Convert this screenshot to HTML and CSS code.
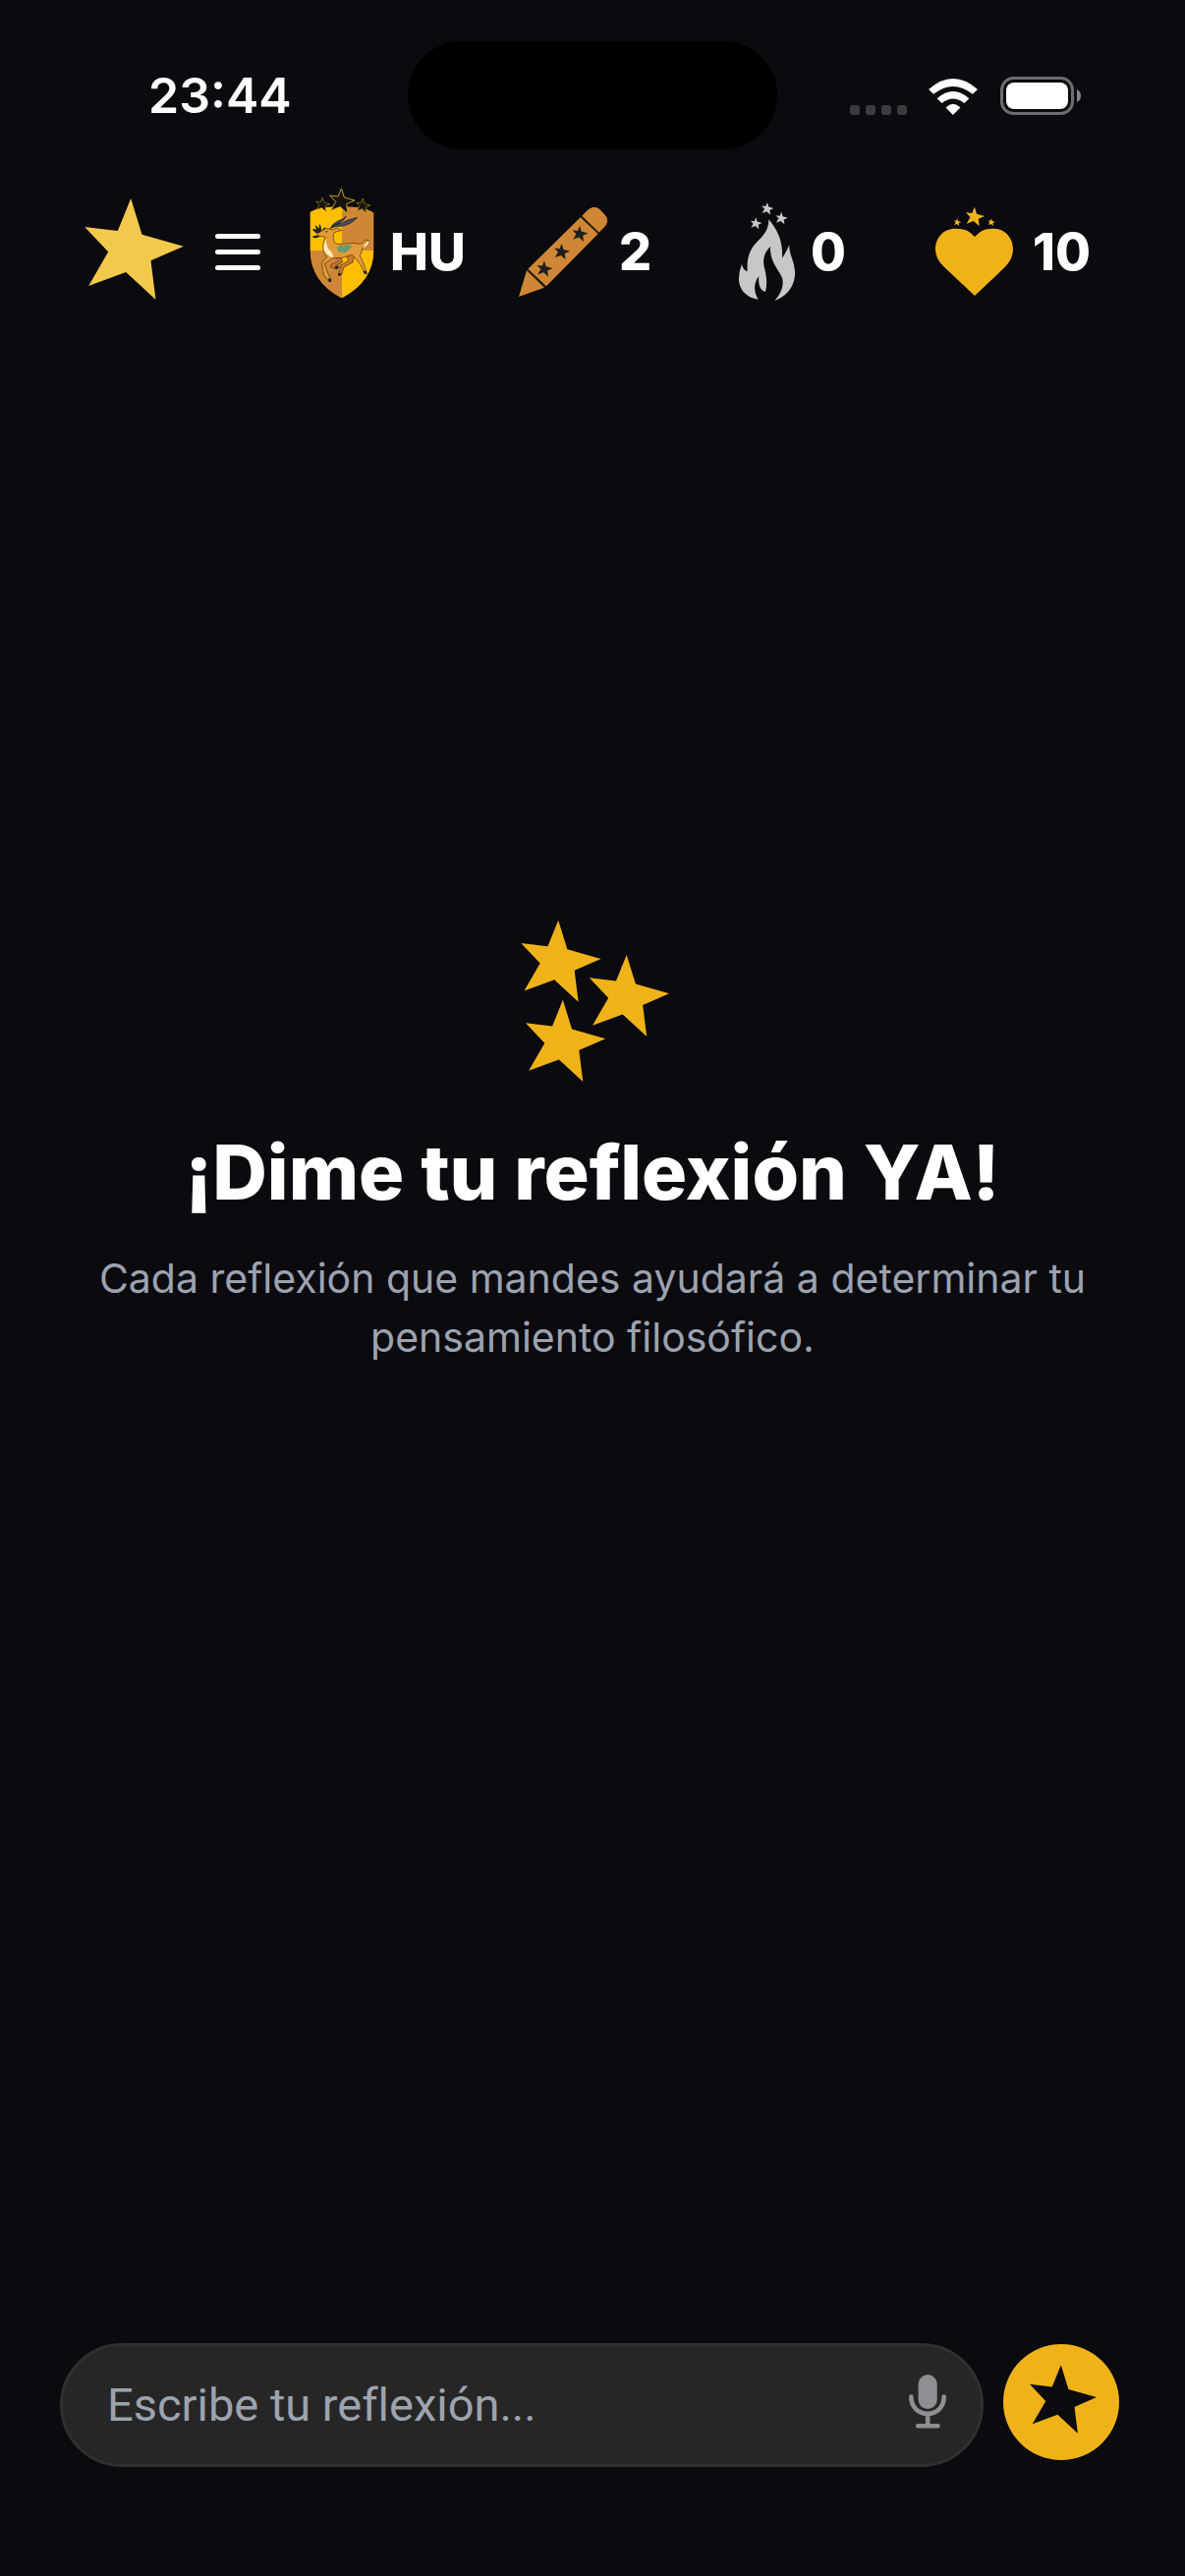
FILE: index.html
```html
<!DOCTYPE html>
<html lang="es">
<head>
    <meta charset="utf-8">
    <meta name="viewport" content="width=device-width, initial-scale=1">
    <title>Reflexión</title>
    <link rel="stylesheet" href="styles.css">
</head>

<body>
    <svg class="defs" aria-hidden="true">
        <symbol id="star" viewBox="0 0 302 309" overflow="visible">
            <path d="M141 0L175 110L302 146L202 190L217 309L126 225L12 267L72 163L0 87L101 99Z"/>
        </symbol>
    </svg>

    <div class="statusbar">
        <div class="clock">23:44</div>
        <div class="island"></div>
        <div class="status-icons">
            <div class="signal"><i></i><i></i><i></i><i></i></div>
            <svg class="wifi" viewBox="316 86 151 112">
                <path d="M316 119Q391 53 467 119L452 134Q391 86 331 134Z"/>
                <path d="M342 147Q391 103 441 147L426 162Q391 134 357 162Z"/>
                <path d="M369 175Q391 153 414 175L391 198Z"/>
            </svg>
            <svg class="battery" viewBox="0 0 82 39">
                <rect x="1.5" y="1.5" width="72" height="36" rx="12" fill="none" stroke="#6d6d70" stroke-width="3"/>
                <rect x="6" y="6" width="63" height="27" rx="8" fill="#fff"/>
                <path d="M78 13Q82 15 82 19.500Q82 24 78 26Z" fill="#858587"/>
            </svg>
        </div>
    </div>

    <header class="topbar">
        <div class="brand">
            <svg class="logo"><use href="#star"/></svg>
            <button class="menu" type="button" aria-label="Menú"><span></span><span></span><span></span></button>
        </div>
        <div class="stat house">
            <svg class="shield" viewBox="20 18 210 384">
                <clipPath id="shieldClip">
                    <path d="M26 88L56 74L124 70L192 74L224 90V207C224 280 178 327 124 355C70 327 26 280 26 207Z"/>
                </clipPath>
                <g clip-path="url(#shieldClip)">
                    <path d="M22 62H125V207H22ZM125 207H232V362H125Z" fill="#ffbf00"/>
                    <path d="M125 62H232V207H125ZM22 207H125V362H22Z" fill="#d08735"/>
                </g>
                <path d="M26 88L56 74L124 70L192 74L224 90V207C224 280 178 327 124 355C70 327 26 280 26 207Z" fill="none" stroke="#050505" stroke-width="4"/>
                <g fill="#15140f" stroke="#d9a80e" stroke-width="11">
                    <use href="#star" x="83" y="17" width="86" height="78"/>
                    <use href="#star" x="45" y="45" width="44" height="43"/>
                    <use href="#star" x="167" y="48" width="46" height="44"/>
                </g>
                <!-- leaves -->
                <path d="M34 165Q45 157 60 163Q45 173 34 165ZM35 142Q49 138 58 158Q42 155 35 142ZM43 130Q56 135 60 156Q46 147 43 130ZM57 125Q65 138 60 156Q51 141 57 125ZM74 134Q74 147 60 158Q61 143 74 134Z" fill="#1d2416"/>
                <!-- gazelle -->
                <g stroke="#50300f" stroke-width="2" stroke-linejoin="round">
                    <path d="M98 222L116 239L92 250L91 258L108 264L116 258L105 254L128 241L116 224ZM140 218L144 238L122 252L115 277L124 280L131 258L158 243L163 220Z" fill="#c8792a"/>
                    <path d="M50 155L61 149L77 139L98 143L110 138L124 145L101 152Q95 168 101 180Q107 190 123 187L164 184Q179 190 188 184L197 174L210 177Q204 195 187 201Q186 213 180 223Q190 239 199 270L192 274Q185 250 171 237L156 220Q126 233 98 230L72 247L83 278L93 297L86 302L69 281L63 245L79 227Q64 211 67 191L74 166L61 163L50 162Z" fill="#e39a38"/>
                </g>
                <path d="M76 171Q67 190 70 205Q76 222 98 229Q98 213 84 203Q76 190 76 171ZM190 200Q195 184 209 178Q204 194 190 200Z" fill="#ffebbf"/>
                <path d="M108 198Q126 187 157 189Q150 211 126 215Q110 213 108 198Z" fill="#82a46c"/>
                <path d="M114 202L125 193M117 210L140 192M130 211L150 194" stroke="#337e79" stroke-width="4" stroke-dasharray="5 3"/>
                <path d="M88 141Q99 133 123 133Q155 127 172 106Q145 111 124 124Q101 125 88 141ZM91 137Q96 125 114 116Q130 112 138 102Q127 122 112 126Q99 129 91 137Z" fill="#454b59" stroke="#16191e" stroke-width="2"/>
                <path d="M74 149L81 146L80 152ZM107 253L117 257L108 265L103 260ZM115 275L125 279L118 285L112 282ZM190 269L200 269L202 280L193 278ZM83 292L92 294L92 303L84 302Z" fill="#20242b"/>
            </svg>
            <span class="house-name">HU</span>
        </div>
        <div class="stat">
            <svg class="pencil" viewBox="84 93 270 273">
                <g fill="#d08735">
                    <path d="M272 124L326 174L168 334L112 281Z"/>
                    <path d="M277 119L291 104Q312 84 331 99L347 116Q361 131 349 149L329 170Z"/>
                    <path d="M108 286L162 338L84 366Z"/>
                </g>
                <path d="M274 121L328 172M110 283L166 336" stroke="#38240f" stroke-width="4"/>
                <g fill="#211f1d">
                    <use href="#star" x="247" y="149" width="49" height="49"/>
                    <use href="#star" x="192" y="204" width="49" height="49"/>
                    <use href="#star" x="139" y="256" width="49" height="49"/>
                </g>
            </svg>
            <span>2</span>
        </div>
        <div class="stat streak">
            <svg class="flame" viewBox="96 80 171 300">
                <path d="M187 132C216 166 231 202 228 250Q240 233 250 209C248 240 269 262 267 302C264 343 235 371 205 380C224 360 233 336 229 314C221 286 190 267 192 215C174 232 167 255 174 280C181 305 183 330 177 353C161 349 154 330 157 305C142 325 139 350 155 376C119 372 94 345 96 310Q97 288 105 268Q108 286 122 291C119 251 129 222 152 200C175 178 187 161 187 132Z"/>
                <use href="#star" x="165" y="80" width="38" height="38"/>
                <use href="#star" x="131" y="126" width="36" height="36"/>
                <use href="#star" x="208" y="109" width="38" height="38"/>
            </svg>
            <span>0</span>
        </div>
        <div class="stat lives">
            <svg class="heart" viewBox="95 96 237 270">
                <path d="M215 186L201 173Q188 161 155 161C119 161 95 189 95 225Q95 252 120 277L215 366L309 277Q332 252 332 225C332 189 307 161 272 161Q242 161 229 173Z"/>
                <use href="#star" x="187" y="95" width="59" height="59"/>
                <use href="#star" x="151" y="130" width="23" height="23"/>
                <use href="#star" x="255" y="130" width="23" height="23"/>
            </svg>
            <span>10</span>
        </div>
    </header>

    <main class="intro">
        <svg class="stars" viewBox="78 82 469 493">
            <use href="#star" x="93" y="81" width="246" height="250"/>
            <use href="#star" x="302" y="187" width="246" height="250"/>
            <use href="#star" x="107" y="325" width="246" height="250"/>
        </svg>
        <h1>¡Dime tu reflexión YA!</h1>
        <p>Cada reflexión que mandes ayudará a determinar tu pensamiento filosófico.</p>
    </main>

    <form class="composer">
        <div class="field">
            <input type="text" placeholder="Escribe tu reflexión..." aria-label="Escribe tu reflexión">
            <button class="mic" type="button" aria-label="Dictar">
                <svg viewBox="135 170 115 166">
                    <rect x="164" y="170" width="58" height="106" rx="29" fill="#8e8e93"/>
                    <path d="M142 238C142 308 243 308 243 238M193 290V328M163 328H224" fill="none" stroke="#8e8e93" stroke-width="14" stroke-linecap="round"/>
                </svg>
            </button>
        </div>
        <button class="send" type="button" aria-label="Enviar">
            <svg><use href="#star"/></svg>
        </button>
    </form>
</body>
</html>
```
FILE: styles.css
```css
* {
    box-sizing: border-box;
}

body {
    margin: 0;
    min-height: 100vh;
    display: flex;
    flex-direction: column;
    background: #0a0a0f;
    color: #fff;
    font-family: Inter, "Liberation Sans", sans-serif;
}

button {
    border: none;
    padding: 0;
    background: none;
    cursor: pointer;
}

svg {
    display: block;
    flex: none;
}

.defs {
    position: absolute;
    width: 0;
    height: 0;
}

/* status bar */
.statusbar {
    display: grid;
    grid-template-columns: 1fr 376px 1fr;
    align-items: center;
    height: 192px;
    padding-top: 2px;
}

.clock {
    padding-left: 151px;
    font-size: 50px;
    line-height: 60px;
    font-weight: 600;
}

.island {
    height: 110px;
    border-radius: 55px;
    background: #000;
}

.status-icons {
    display: flex;
    justify-content: flex-end;
    align-items: flex-end;
    padding-right: 106px;
}

.signal {
    display: flex;
    gap: 6px;
}

.signal i {
    width: 10px;
    height: 10px;
    border-radius: 3px;
    background: #3c3c3f;
}

.wifi {
    width: 50px;
    height: 37px;
    margin: 0 23px 0 22px;
    fill: #fff;
}

.battery {
    width: 82px;
    height: 39px;
}

/* top bar */
.topbar {
    display: grid;
    grid-template-columns: 227fr 215fr 224fr 200fr 168fr;
    align-items: center;
    height: 128px;
    padding: 0 86px;
}

.brand,
.stat {
    display: flex;
    align-items: center;
}

.logo {
    width: 101px;
    height: 103px;
    margin: 0 32px 6px 0;
    fill: #f2c94c;
}

.menu {
    display: flex;
    flex-direction: column;
    gap: 11px;
}

.menu span {
    width: 46px;
    height: 5px;
    border-radius: 3px;
    background: #fff;
}

.stat {
    gap: 12px;
    font-size: 52px;
    line-height: 60px;
    font-weight: 800;
}

.house {
    gap: 14px;
}

.streak {
    gap: 16px;
}

.lives {
    gap: 20px;
}

.stat span {
    padding-top: 2px;
}

.shield {
    width: 70px;
    height: 128px;
}

.pencil {
    width: 90px;
    height: 91px;
}

.flame {
    width: 57px;
    height: 100px;
    fill: #c7c7c7;
}

.heart {
    width: 79px;
    height: 90px;
    fill: #efb319;
}

/* intro */
.intro {
    flex: 1;
    display: flex;
    flex-direction: column;
    align-items: center;
    justify-content: center;
    padding: 0 96px 378px;
    text-align: center;
}

.stars {
    width: 156px;
    height: 164px;
    fill: #efb319;
}

.intro h1 {
    margin: 46px 0 32px;
    font-size: 77px;
    line-height: 92px;
    font-weight: 800;
}

.intro p {
    margin: 0;
    color: #9ca3af;
    font-size: 41px;
    line-height: 60px;
}

/* composer */
.composer {
    display: flex;
    gap: 20px;
    padding: 0 67px 111px 61px;
}

.field {
    flex: 1;
    display: flex;
    align-items: center;
    height: 126px;
    padding: 0 35px 0 45px;
    border: 3px solid #303030;
    border-radius: 63px;
    background: #262626;
}

.field input {
    flex: 1;
    min-width: 0;
    padding: 0;
    border: none;
    outline: none;
    background: none;
    color: #fff;
    font-family: Roboto, "Liberation Sans", sans-serif;
    font-size: 47px;
    line-height: 60px;
    font-variant-ligatures: none;
}

.field input::placeholder {
    color: #9ca3af;
    opacity: 1;
}

.mic svg {
    width: 38px;
    height: 55px;
    margin-bottom: 8px;
}

.send {
    display: flex;
    align-items: center;
    justify-content: center;
    width: 118px;
    height: 118px;
    margin-top: 1px;
    border-radius: 50%;
    background: #efb319;
}

.send svg {
    width: 68px;
    height: 70px;
    margin: 0 0 6px 4px;
    fill: #0a0a0f;
}
```
